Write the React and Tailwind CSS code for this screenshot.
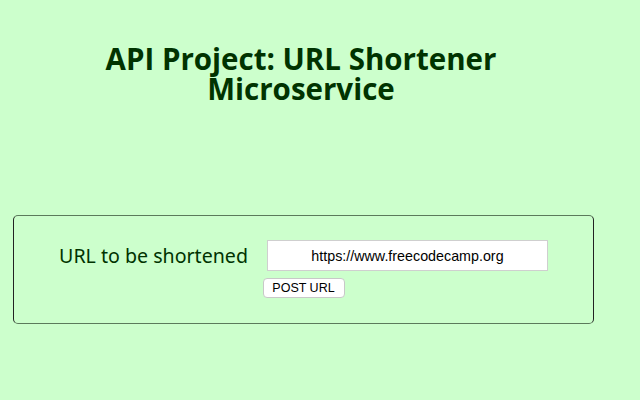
import React from 'react';

export default function App() {
  return (
    <div className="min-h-screen bg-[#ccffcc] text-[#003300]">
      <div className="w-[594px] pl-[13px]">
        <h1
          className="mx-auto w-[440px] pt-[44px] pr-[5px] text-center text-[29.5px] font-bold leading-[30px]"
          style={{ fontFamily: '"Open Sans", "Noto Sans", sans-serif' }}
        >
          API Project: URL Shortener Microservice
        </h1>

        <form
          className="mt-[111px] flex h-[109px] flex-col items-center rounded-[5px] border border-[#222] border-t-[#5b7a5b] border-b-[#5b7a5b] pt-[24px]"
          onSubmit={(e) => e.preventDefault()}
        >
          <div className="flex items-center gap-[19px]">
            <label
              className="text-[19.6px]"
              style={{ fontFamily: '"Noto Sans", "Open Sans", sans-serif' }}
            >
              URL to be shortened
            </label>
            <input
              type="text"
              defaultValue="https://www.freecodecamp.org"
              className="h-[31px] w-[281px] border border-[#cfcfcf] bg-white text-center text-[14.3px] text-black outline-none"
              style={{ fontFamily: '"Liberation Sans", Arial, sans-serif' }}
            />
          </div>
          <button
            type="submit"
            className="mt-[7px] h-[20px] w-[82px] rounded-[4px] border border-[#c8c8c8] bg-white text-[12.5px] leading-none text-black"
            style={{ fontFamily: '"Liberation Sans", Arial, sans-serif' }}
          >
            POST URL
          </button>
        </form>
      </div>
    </div>
  );
}
